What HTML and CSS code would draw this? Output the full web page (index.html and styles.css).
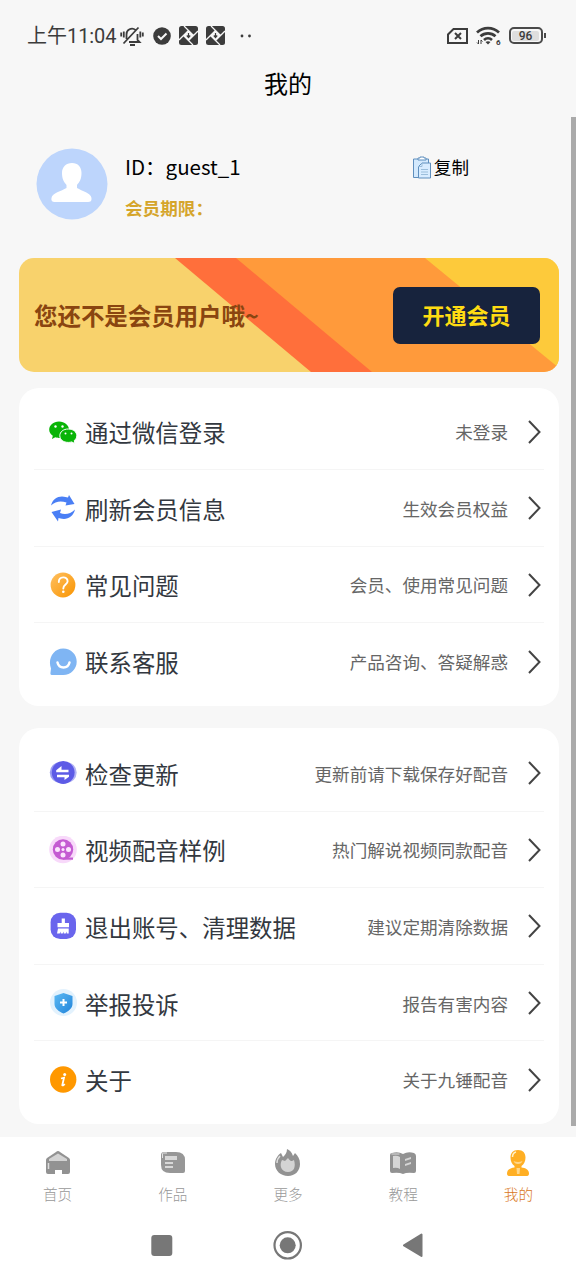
FILE: index.html
```html
<!DOCTYPE html>
<html lang="zh-CN">
<head>
<meta charset="utf-8">
<title>我的</title>
<link rel="stylesheet" href="styles.css">
</head>
<body>
<div class="screen">
  <header class="status">
    <span class="time">上午<span class="clock">11:04</span></span>
    <svg class="bell" width="24" height="22" viewBox="0 0 24 22" fill="none" stroke="#3c3c3c" stroke-width="1.800"><path d="M6.500 14V9.500a5.500 5.500 0 0 1 9-4.500M17.500 9v6l2 2H9M3.500 18.500 18.500 2.500M10 20h5M1.200 7.500v4M3.800 6.500v6M22.800 7.500v4M20.300 6.500v6"/></svg>
    <svg class="check" width="18" height="18" viewBox="0 0 18 18"><circle cx="9" cy="9" r="8.800" fill="#3c3c3c"/><path d="m5 9 3 3 5.500-5.500" fill="none" stroke="#f7f7f7" stroke-width="2"/></svg>
    <svg class="app" width="19" height="19" viewBox="0 0 19 19"><rect width="19" height="19" rx="2.500" fill="#3c3c3c"/><path d="M5 0l9.500 9.500M14 19 4.500 9.500M19 5l-9.500 9.500M0 14 9.500 4.500" stroke="#f7f7f7" stroke-width="1.300"/><path d="m9.500 4.500 5 5-5 5-5-5z" fill="#f7f7f7"/><path d="M9.500 7v4M7.800 9.500l1.700 2 1.700-2" fill="none" stroke="#3c3c3c" stroke-width="1.200"/></svg>
    <svg class="app" width="19" height="19" viewBox="0 0 19 19"><rect width="19" height="19" rx="2.500" fill="#3c3c3c"/><path d="M5 0l9.500 9.500M14 19 4.500 9.500M19 5l-9.500 9.500M0 14 9.500 4.500" stroke="#f7f7f7" stroke-width="1.300"/><path d="m9.500 4.500 5 5-5 5-5-5z" fill="#f7f7f7"/><path d="M9.500 7v4M7.800 9.500l1.700 2 1.700-2" fill="none" stroke="#3c3c3c" stroke-width="1.200"/></svg>
    <svg class="dots" width="12" height="4" viewBox="0 0 12 4"><circle cx="2" cy="2" r="1.400" fill="#3c3c3c"/><circle cx="9.500" cy="2" r="1.400" fill="#3c3c3c"/></svg>
    <svg class="sim" width="21" height="16" viewBox="0 0 21 16" fill="none" stroke="#3c3c3c" stroke-width="2"><path d="M6.500 1H20v14H1V6.500zM8 5l6 6M14 5l-6 6"/></svg>
    <svg class="wifi" width="26" height="20" viewBox="0 0 26 20"><path d="M1 6.500a16 16 0 0 1 22 0M4.500 10.300a11 11 0 0 1 15 0M8 14a6 6 0 0 1 8 0" fill="none" stroke="#3c3c3c" stroke-width="2.700"/><path d="m9.500 16 2.500 2.500 2.500-2.500q-2.500-1.500-5 0z" fill="#3c3c3c"/><path d="M2.500 14v4L1 16.500M5 18v-4l1.500 1.500" fill="none" stroke="#3c3c3c"/><text x="20" y="18.500" class="wifi-gen">6</text></svg>
    <span class="battery"><span class="charge">96</span></span><span class="nub"></span>
  </header>
  <h1 class="title">我的</h1>

  <main class="content">
    <section class="profile">
      <svg class="avatar" width="72" height="72" viewBox="0 0 72 72"><circle cx="36" cy="36" r="35.500" fill="#bdd5fc"/><path d="M36 15c6 0 9.500 4 9.500 10 0 6-2 9-4.500 12v3c5 3 14 5 14.500 10 .3 3-1 4-3.500 4H19c-2.500 0-4-1-3.500-4 .5-5 10-7 15-10v-3c-2.500-3-4.500-6-4.500-12 0-6 4-10 10-10z" fill="#fff"/></svg>
      <div class="who">
        <div class="uid">ID：guest_1</div>
        <div class="expiry">会员期限：</div>
      </div>
      <div class="copy">
        <svg width="20" height="23" viewBox="0 0 20 23" fill="#d3e9fd" stroke="#5f8fbe"><path d="M1.500 3h15v18.500h-15z"/><path d="M6 4V2h2V1h4v1h2v2z" fill="#fff"/><path d="M10 7h8.500v15h-12V10.500z" fill="#d8ecff"/><path d="M10 7v3.500H6.500M9 13.500h7M9 16h7M9 18.500h7" fill="none" stroke="#9bbedb"/></svg>
        <span>复制</span>
      </div>
    </section>

    <section class="banner">
      <svg class="stripes" width="540" height="114" viewBox="0 0 540 114"><path fill="#f8d26c" d="M0 0h540v114H0z"/><path fill="#ff6f3b" d="M156 0h70l136 114h-70z"/><path fill="#ff9a3b" d="M217 0h190l133 109v5H353z"/><path fill="#fdca3b" d="M406 0h134v110z"/></svg>
      <strong class="pitch">您还不是会员用户哦~</strong>
      <button class="open">开通会员</button>
    </section>

    <section class="card">
      <div class="row"><svg class="icon" viewBox="0 0 28 28"><path d="M10 3.500c5.700 0 10 3.700 10 8.200s-4.300 8.200-10 8.200c-1.500 0-2.500 0-3.700-.6L3 21l.8-3.300C1.500 16.200.2 14 .2 11.700.2 7.200 4.300 3.500 10 3.500z" fill="#09b407"/><path d="M19.300 11c5 0 8.500 2.900 8.500 6.700 0 2-1 3.600-2.500 4.800l.5 3-3.200-1.600c-1 .4-2 .5-3.300.5-5 0-8.500-2.900-8.500-6.700S14.300 11 19.300 11z" fill="#09b407" stroke="#fff" stroke-width="1"/><g fill="#fff"><circle cx="6.500" cy="8.500" r="1.200"/><circle cx="13.500" cy="8.500" r="1.200"/><circle cx="16.500" cy="15.500" r="1"/><circle cx="22.500" cy="15.500" r="1"/></g></svg><span class="label">通过微信登录</span><span class="desc">未登录</span><svg class="chev" viewBox="0 0 13 24"><path d="m1 1 10.500 11L1 23"/></svg></div>
      <div class="row"><svg class="icon" viewBox="0 0 28 28" fill="#4a7ff5"><path d="M2 11.500C3.500 5.500 8 2.500 13 2.500c3 0 4 1 6 1l1-2.500 5.500 9-9 1.500 1-3C12 6.500 6.500 7 2 11.500z"/><path d="M26 15.500c-1.500 6-6 9.500-11 9.500-3 0-4-.8-5.500-1L9 27.500l-6.500-9.500 9.500-2.500L11 19c5 2 10.500 1 15-3.500z"/></svg><span class="label">刷新会员信息</span><span class="desc">生效会员权益</span><svg class="chev" viewBox="0 0 13 24"><path d="m1 1 10.500 11L1 23"/></svg></div>
      <div class="row"><svg class="icon" viewBox="0 0 28 28"><defs><linearGradient id="amber" x2="1" y2="1"><stop stop-color="#ffc061"/><stop offset="1" stop-color="#f99400"/></linearGradient></defs><circle cx="14" cy="14" r="12.400" fill="url(#amber)"/><path d="M9.800 11c0-6 8.800-6 8.800-.8 0 3.500-4.300 3.300-4.300 7.300" fill="none" stroke="#fff" stroke-width="1.900" stroke-linecap="round"/><circle cx="14.300" cy="20.800" r="1.300" fill="#fff"/></svg><span class="label">常见问题</span><span class="desc">会员、使用常见问题</span><svg class="chev" viewBox="0 0 13 24"><path d="m1 1 10.500 11L1 23"/></svg></div>
      <div class="row"><svg class="icon" viewBox="0 0 28 28"><path d="M14.200.5C22 .5 27.700 6.500 27.700 13.700S22 27 14.200 27H3Q1 27 1.500 24.500L2 20.500C-1.500 11.500 4 .5 14.200.5z" fill="#7fb5f3"/><path d="M8.500 14.500c1.500 6.500 10.500 6.500 12 0" fill="none" stroke="#fff" stroke-width="2.500" stroke-linecap="round"/></svg><span class="label">联系客服</span><span class="desc">产品咨询、答疑解惑</span><svg class="chev" viewBox="0 0 13 24"><path d="m1 1 10.500 11L1 23"/></svg></div>
    </section>

    <section class="card card-more">
      <div class="row"><svg class="icon" viewBox="0 0 28 28"><circle cx="11.300" cy="13.500" r="10.500" fill="#9b9df2"/><circle cx="17.200" cy="13.500" r="10.500" fill="#b3b4f4"/><circle cx="14.200" cy="13.500" r="11.400" fill="#5d5be6"/><path d="M19.500 10.700v2.600H7.200v-2L12.500 7v3.700zM8 15.700h12v2L15.500 21v-2.800H8z" fill="#fff"/></svg><span class="label">检查更新</span><span class="desc">更新前请下载保存好配音</span><svg class="chev" viewBox="0 0 13 24"><path d="m1 1 10.500 11L1 23"/></svg></div>
      <div class="row"><svg class="icon" viewBox="0 0 28 28"><circle cx="14" cy="13.500" r="13.800" fill="#f8d9fa"/><circle cx="14" cy="13.500" r="10.200" fill="#c45bd2"/><path d="M14 21.500h10v2.200H14z" fill="#c45bd2"/><g fill="#fbe5fd"><circle cx="14" cy="8" r="2.500"/><circle cx="14" cy="19" r="2.500"/><circle cx="8.500" cy="13.500" r="2.500"/><circle cx="19.500" cy="13.500" r="2.500"/><circle cx="14" cy="13.500" r="1.500"/></g></svg><span class="label">视频配音样例</span><span class="desc">热门解说视频同款配音</span><svg class="chev" viewBox="0 0 13 24"><path d="m1 1 10.500 11L1 23"/></svg></div>
      <div class="row"><svg class="icon" viewBox="0 0 28 28"><rect x="1.600" y=".8" width="25.400" height="26.200" rx="9.500" fill="#6a65ed"/><path d="M12.700 6.500h3.200V11H20v4.300H8.500V11h4.200zM9 16.500h10.700v5h-2v-2l-1 2h-2v-2l-1 2h-2v-2l-1 2H8z" fill="#fff"/></svg><span class="label">退出账号、清理数据</span><span class="desc">建议定期清除数据</span><svg class="chev" viewBox="0 0 13 24"><path d="m1 1 10.500 11L1 23"/></svg></div>
      <div class="row"><svg class="icon" viewBox="0 0 28 28"><defs><linearGradient id="shield" x2="1" y2="1"><stop stop-color="#5bb9f3"/><stop offset="1" stop-color="#2384da"/></linearGradient></defs><circle cx="14.500" cy="13.500" r="13.500" fill="#e3f2fd"/><path d="m14.500 4 9 3v8c0 4-4 7.500-9 9.500-5-2-9-5.500-9-9.500V7z" fill="url(#shield)"/><path d="M14.500 10v7M11 13.500h7" stroke="#fff" stroke-width="2"/></svg><span class="label">举报投诉</span><span class="desc">报告有害内容</span><svg class="chev" viewBox="0 0 13 24"><path d="m1 1 10.500 11L1 23"/></svg></div>
      <div class="row"><svg class="icon" viewBox="0 0 28 28"><circle cx="14.200" cy="13.500" r="13.200" fill="#ff9800"/><circle cx="15.700" cy="8.500" r="1.500" fill="#fff"/><path d="M12 12.500 15 11.700l-1.700 7.500q.5.800 2.500-1" fill="none" stroke="#fff" stroke-width="1.800"/></svg><span class="label">关于</span><span class="desc">关于九锤配音</span><svg class="chev" viewBox="0 0 13 24"><path d="m1 1 10.500 11L1 23"/></svg></div>
    </section>
  </main>

  <nav class="tabs">
    <div class="tab"><svg viewBox="0 0 28 28"><path d="M14 2q1 0 2 1l9 6q1 1 1 2v12q0 2-2 2h-6v-4h-7v4H4q-2 0-2-2V11q0-1 1-2l9-6q1-1 2-1z" fill="#929292"/><path d="m14 4.500 9 5.500v2H5v-2z" fill="#d3d3d3"/><path d="M4.500 14v6" stroke="#ddd" stroke-width="1.500"/></svg><span>首页</span></div>
    <div class="tab"><svg viewBox="0 0 28 28"><path d="M5 3h12q9 0 9 8v11q0 2-2 2H11q-9 0-9-8V6q0-3 3-3z" fill="#979797"/><path d="M6 7h12v4H6zM6 13h8v2H6zM6 17h8v2H6z" fill="#d8d8d8"/><path d="M3.500 9V5q0-1 1-1H8" fill="none" stroke="#e4e4e4"/></svg><span>作品</span></div>
    <div class="tab"><svg viewBox="0 0 28 28"><path d="M13 0c4 2 5 4 6 7l2-3c3 3 5 6 5 11 0 7-5 12-12 12S1 22 1 15C1 10 4 6 7 4l2 4c2-2 4-4 4-8z" fill="#929292"/><path d="M14 9c2 3 3 3 4 3l2-1c2 7 0 12-6 12-7 0-9-7-6-12l3 1z" fill="#d4d4d4"/><path d="M3 14q0-4 3-7" fill="none" stroke="#ddd" stroke-width="1.500"/></svg><span>更多</span></div>
    <div class="tab"><svg viewBox="0 0 28 28"><path d="M3 4q6-2 11 1 5-3 11-1 2 1 2 3v15q0 2-2 2-7-1-11 1-4-2-11-1-2 0-2-2V6q0-2 2-2z" fill="#929292"/><path d="M4 7q4-1 7 1v12q-3-2-7-1zM16 10l6-2v2l-6 2zM16 15l6-2v2l-6 2z" fill="#d6d6d6"/><path d="M2.500 5h8" stroke="#ddd"/></svg><span>教程</span></div>
    <div class="tab active"><svg viewBox="0 0 28 28"><path d="M14 1c5 0 7.500 3 7.500 7.500 0 4-1.500 6.500-4 8.500v1.500c4 .5 7.500 2 7.500 6 0 2-1 2.500-3 2.500H6c-2 0-3-.5-3-2.500 0-4 3.500-5.500 7.500-6V17c-2.500-2-4-4.500-4-8.500C6.500 4 9 1 14 1z" fill="#ffaf24"/><path d="M9.500 12q4.500 2 9 0-1 3-4.500 3t-4.500-3zM12.500 19h3.500l-.5 6h-2.500z" fill="#ffd78a"/><path d="M8.500 8q0-4 3.500-5" fill="none" stroke="#fff1ca" stroke-width="1.500"/></svg><span>我的</span></div>
  </nav>
  <footer class="system">
    <svg width="22" height="30" viewBox="0 0 22 30"><rect x=".3" y="5" width="21" height="21" rx="3" fill="#777"/></svg>
    <svg width="30" height="30" viewBox="0 0 30 30"><circle cx="14.700" cy="15.300" r="13.200" fill="none" stroke="#777" stroke-width="2.200"/><circle cx="14.700" cy="15.300" r="8" fill="#777"/></svg>
    <svg width="22" height="30" viewBox="0 0 22 30"><path d="M1 15.300 18.500 4.500v21.500z" fill="#777" stroke="#777" stroke-width="2" stroke-linejoin="round"/></svg>
  </footer>
  <div class="scrollbar"></div>
</div>
</body>
</html>
```
FILE: styles.css
```css
* { box-sizing: border-box; }
body { margin: 0; background: #f7f7f7; font-family: "Noto Sans CJK SC", "Noto Sans", sans-serif; }
svg { display: block; flex: none; }
.screen { position: relative; width: 576px; height: 1280px; display: flex; flex-direction: column; overflow: hidden; }
.status { height: 64px; padding: 7px 0 0 27px; display: flex; align-items: center; color: #3c3c3c; }
.time { width: 90px; font-size: 20px; line-height: 28px; white-space: nowrap; }
.clock { font-family: Roboto, sans-serif; font-size: 20px; letter-spacing: -0.1px; }
.bell { margin-left: 3px; }
.check { margin-left: 8.500px; }
.app { margin-left: 8px; }
.dots { margin-left: 15px; }
.sim { margin-left: 195px; }
.wifi { margin-left: 8px; }
.wifi-gen { font: bold 8px Roboto, sans-serif; fill: #3c3c3c; }
.battery { width: 34px; height: 17px; margin-left: 7px; padding: 1.500px; border: 2px solid #4a4a4a; border-radius: 5px; display: flex; }
.charge { flex: 1; background: #dedede; border-radius: 2px; font: 500 12px/10px Roboto, sans-serif; text-align: center; }
.nub { width: 2px; height: 5px; margin-left: 1px; background: #4a4a4a; }
.title { margin: 0; height: 54px; font-size: 24px; font-weight: 400; line-height: 38px; text-align: center; color: #000; }
.content { height: 1018.500px; padding: 0 17px 0 19px; }
.profile { height: 140px; padding: 30px 90px 0 17px; display: flex; align-items: flex-start; }
.who { margin-left: 17px; }
.uid { height: 40px; font-size: 20.500px; line-height: 37px; color: #000; }
.expiry { font-size: 17.600px; font-weight: 700; line-height: 40px; color: #d5a52b; }
.copy { margin-left: auto; padding-top: 7px; display: flex; align-items: center; gap: 2px; font-size: 17.600px; line-height: 24px; color: #000; }
.banner { position: relative; height: 114px; padding: 0 19px 0 15px; border-radius: 15px; overflow: hidden; display: flex; align-items: center; justify-content: space-between; }
.stripes { position: absolute; inset: 0; }
.pitch { position: relative; font-size: 23.450px; font-weight: 700; color: #8a4510; }
.open { position: relative; width: 147px; height: 57px; padding: 0 0 2px; border: 0; border-radius: 7px; background: #17233d; color: #ffdc12; font-family: inherit; font-size: 22px; font-weight: 700; }
.card { margin-top: 15.500px; height: 318.500px; padding: 6px 15px; border-radius: 20px; background: #fff; }
.card-more { margin-top: 22px; height: 396px; padding-top: 7px; }
.row { height: 76.600px; padding: 1px 3px 0 15px; border-bottom: 1px solid #f5f5f5; display: flex; align-items: center; }
.row:last-child { border-bottom-color: transparent; }
.icon { width: 28px; height: 28px; margin-left: -0.500px; }
.label { margin-left: 8.500px; padding-top: 1px; font-size: 23.450px; line-height: 34px; color: #333840; }
.desc { margin-left: auto; padding-top: 1px; font-size: 17.600px; line-height: 26px; color: #666; }
.chev { width: 13px; height: 24px; margin-left: 20px; fill: none; stroke: #444; stroke-width: 2; }
.tabs { height: 74px; padding-top: 12px; display: grid; grid-template-columns: repeat(5, 1fr); background: #fff; }
.tab { display: flex; flex-direction: column; align-items: center; font-size: 14.600px; font-weight: 300; line-height: 24px; color: #999; }
.tab svg { width: 28px; height: 28px; margin-bottom: 5px; }
.active { color: #d9771c; }
.system { flex: 1; padding: 19.500px 151px 0; display: flex; align-items: flex-start; justify-content: space-between; background: #fff; }
.scrollbar { position: absolute; right: 0; top: 117px; width: 5px; height: 1009px; background: #aaa; }
```
